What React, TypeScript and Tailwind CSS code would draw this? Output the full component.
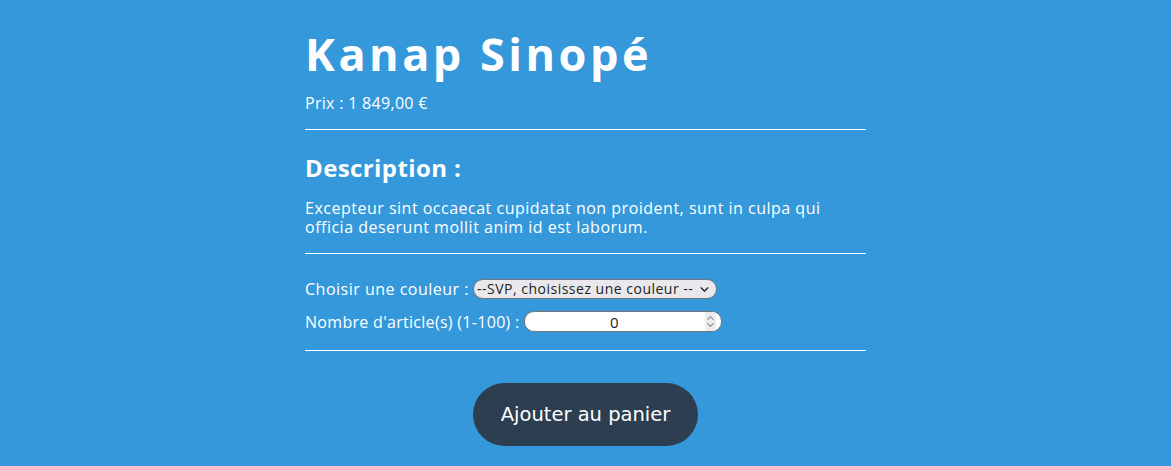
import { useState } from "react";

function Chevron({ up = false, className = "" }: { up?: boolean; className?: string }) {
  return (
    <svg viewBox="0 0 10 6" className={className} fill="none" stroke="currentColor" strokeWidth="1.6" strokeLinecap="round" strokeLinejoin="round">
      <path d={up ? "M1 5 L5 1 L9 5" : "M1 1 L5 5 L9 1"} />
    </svg>
  );
}

export default function App() {
  const [color, setColor] = useState("");
  const [qty, setQty] = useState("0");

  return (
    <div className="min-h-[466px] bg-[#3498db] text-white font-['Open_Sans',sans-serif] tracking-[0.5px]">
      <article className="w-[561px] mx-auto pt-[28px]">
        <h1 className="text-[45px] leading-[52px] font-bold tracking-[3.5px]">Kanap Sinopé</h1>
        <p className="mt-[13px] text-[16px] leading-[20px] tracking-[0.3px]">Prix : 1 849,00 €</p>
        <hr className="mt-[16px] border-t border-white" />

        <h2 className="mt-[23px] text-[24px] leading-[30px] font-bold tracking-[0.4px]">Description :</h2>
        <p className="mt-[16px] text-[16px] leading-[19px]">
          Excepteur sint occaecat cupidatat non proident, sunt in culpa qui officia deserunt mollit anim id est laborum.
        </p>
        <hr className="mt-[16px] border-t border-white" />

        <div className="mt-[25px] flex items-center h-[20px] gap-[4px] text-[16px] leading-[20px]">
          <label htmlFor="colors">Choisir une couleur :</label>
          <div className="relative">
            <select
              id="colors"
              value={color}
              onChange={(e) => setColor(e.target.value)}
              className="appearance-none block h-[20px] w-[244px] rounded-[10px] border border-[#767676] bg-[#e9e9ed] text-[#222] text-[14px] leading-[18px] pl-[3px] tracking-[0.5px]"
            >
              <option value="">--SVP, choisissez une couleur --</option>
              <option value="blue">Blue</option>
              <option value="white">White</option>
              <option value="black">Black</option>
            </select>
            <Chevron className="pointer-events-none absolute right-[8px] top-[8px] w-[9px] h-[5px] text-[#222]" />
          </div>
        </div>

        <div className="mt-[12px] flex items-center h-[21px] gap-[4px] text-[16px] leading-[20px]">
          <label htmlFor="quantity" className="tracking-[0.3px]">Nombre d'article(s) (1-100) :</label>
          <div className="flex h-[21px] w-[198px] items-stretch rounded-[10px] border border-[#767676] bg-white overflow-hidden pr-[5px]">
            <input
              id="quantity"
              type="number"
              min={1}
              max={100}
              value={qty}
              onChange={(e) => setQty(e.target.value)}
              className="flex-1 min-w-0 bg-transparent text-[#222] text-[15px] text-center outline-none [appearance:textfield] [&::-webkit-inner-spin-button]:appearance-none [&::-webkit-outer-spin-button]:appearance-none"
            />
            <div className="flex w-[11px] flex-col items-center justify-center gap-[3px] bg-[#ebebef] text-[#8a8a8a]">
              <Chevron up className="w-[7px] h-[4px]" />
              <Chevron className="w-[7px] h-[4px]" />
            </div>
          </div>
        </div>
        <hr className="mt-[18px] border-t border-white" />

        <div className="mt-[32px] flex justify-center">
          <button className="w-[225px] h-[63px] rounded-full bg-[#2c3e50] text-white text-[19.5px] tracking-normal font-['DejaVu_Sans',sans-serif]">
            Ajouter au panier
          </button>
        </div>
      </article>
    </div>
  );
}
